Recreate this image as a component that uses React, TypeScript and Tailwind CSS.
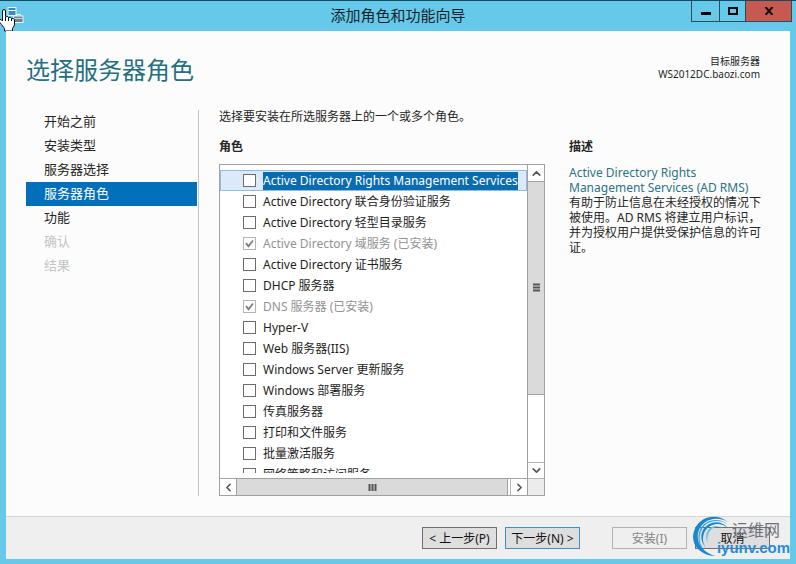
import React from "react";
import { ChevronDown, ChevronLeft, ChevronRight, ChevronUp } from "lucide-react";

const steps = [
  { label: "开始之前" },
  { label: "安装类型" },
  { label: "服务器选择" },
  { label: "服务器角色", active: true },
  { label: "功能" },
  { label: "确认", disabled: true },
  { label: "结果", disabled: true },
];

const roles = [
  { label: "Active Directory Rights Management Services", selected: true },
  { label: "Active Directory 联合身份验证服务" },
  { label: "Active Directory 轻型目录服务" },
  { label: "Active Directory 域服务 (已安装)", installed: true },
  { label: "Active Directory 证书服务" },
  { label: "DHCP 服务器" },
  { label: "DNS 服务器 (已安装)", installed: true },
  { label: "Hyper-V" },
  { label: "Web 服务器(IIS)" },
  { label: "Windows Server 更新服务" },
  { label: "Windows 部署服务" },
  { label: "传真服务器" },
  { label: "打印和文件服务" },
  { label: "批量激活服务" },
  { label: "网络策略和访问服务" },
];

const TitleBar: React.FC = () => (
  <header className="relative flex h-[31px] shrink-0 items-start justify-center border-t border-[#164a60]">
    <svg className="absolute left-[7px] top-[6px]" width="17" height="17" viewBox="0 0 17 17">
      <rect x="1" y="0.5" width="8" height="8" fill="#3d8cbf" stroke="#e8f6fc" />
      <path d="M1 3.500h8" stroke="#e8f6fc" />
      <path d="M9.500 9V7.500h4V9" fill="none" stroke="#e8f6fc" />
      <rect x="6.500" y="9" width="9.500" height="6.500" fill="#71848e" stroke="#e8f6fc" />
      <path d="M7 11.500h9" stroke="#c4d6dd" />
    </svg>
    <svg className="absolute left-0 top-2" width="16" height="23" viewBox="0 0 16 23">
      <path
        d="M2.500 12V2Q2.500 .5 4 .5T5.500 2v5.500q2.500-.8 3 1 2.500-.8 3 1 2.800-.8 3 1.500v5l-2 3.500v2.500H4.500v-2.500L1.500 15.500-1 12.500Q-1 10 1 10.500z"
        fill="#fff"
        stroke="#111"
      />
      <path d="M5.500 8v4M8.500 8.500V12M11.500 9.500V12" stroke="#111" />
    </svg>
    <h1 className="text-[15px] leading-[29px] text-[#15232a]">添加角色和功能向导</h1>
    <div className="absolute right-[4px] top-0 flex h-[21px] border border-t-0 border-[#2b4c5a]">
      <button aria-label="Minimize" className="flex w-[27px] items-center justify-center">
        <svg width="10" height="10"><path d="M0 7.500h10" stroke="#000" strokeWidth="3" /></svg>
      </button>
      <button aria-label="Maximize" className="flex w-[27px] items-center justify-center border-x border-[#2b4c5a]">
        <svg width="10" height="8"><rect x="1" y="1" width="8" height="6" fill="none" stroke="#000" strokeWidth="2" /></svg>
      </button>
      <button aria-label="Close" className="flex w-[45px] items-center justify-center bg-[#c75a50]">
        <svg width="10" height="8" viewBox="0 0 10 8"><path d="M1.500 0l7 8M8.500 0l-7 8" stroke="#111" strokeWidth="2" /></svg>
      </button>
    </div>
  </header>
);

const StepNav: React.FC = () => (
  <nav className="w-[173px] shrink-0 border-r border-[#c3c3c8] pr-px text-[13px]">
    {steps.map((s) => (
      <a
        key={s.label}
        href="#"
        aria-disabled={s.disabled}
        className={`block h-6 pl-[18px] leading-[22px] ${
          s.active ? "bg-[#0070ba] text-white" : s.disabled ? "text-[#c4c4c4]" : "text-[#262626]"
        }`}
      >
        {s.label}
      </a>
    ))}
  </nav>
);

const RoleList: React.FC = () => (
  <div className="flex min-h-0 flex-1 border border-[#a3a0a0] bg-white">
    <div className="flex min-w-0 flex-1 flex-col">
      <ul className="mb-[5px] mt-[5px] min-h-0 flex-1 overflow-hidden">
        {roles.map((r) => (
          <li
            key={r.label}
            className={`flex h-[21px] items-center border pl-[22px] ${
              r.selected ? "border-[#8fbddc] bg-[#dbe9fb]" : "border-transparent"
            }`}
          >
            <label className={`flex items-center whitespace-nowrap ${r.installed ? "text-[#929292]" : "text-[#1e1e1e]"}`}>
              <span className="relative mr-[7px] flex">
                <input
                  type="checkbox"
                  defaultChecked={r.installed}
                  disabled={r.installed}
                  className={`size-[13px] appearance-none border bg-white ${
                    r.installed ? "border-[#b4b4b4]" : "border-[#6c6c6c]"
                  }`}
                />
                {r.installed && (
                  <svg className="absolute inset-0" width="13" height="13" viewBox="0 0 13 13">
                    <path d="M3 6.200l2.500 3L10 3.500" fill="none" stroke="#7d7d7d" strokeWidth="1.800" />
                  </svg>
                )}
              </span>
              <span className={r.selected ? "bg-[#0a6cb0] text-white" : ""}>{r.label}</span>
            </label>
          </li>
        ))}
      </ul>
      <div className="flex h-[17px] shrink-0 border-t border-[#a3a0a0]">
        <button aria-label="Scroll left" className="flex w-4 items-center justify-center text-[#555]">
          <ChevronLeft size={13} strokeWidth={3} />
        </button>
        <div className="flex flex-1 items-center justify-center border-x border-[#a3a0a0] bg-[#dadada]">
          <svg width="9" height="7"><path d="M1.500 0v7M4.500 0v7M7.500 0v7" stroke="#555" strokeWidth="2" /></svg>
        </div>
        <button aria-label="Scroll right" className="ml-[2px] flex w-[17px] items-center justify-center border-l border-[#b5b5b5] text-[#555]">
          <ChevronRight size={13} strokeWidth={3} />
        </button>
      </div>
    </div>
    <div className="flex w-[17px] shrink-0 flex-col border-l border-[#a3a0a0]">
      <button aria-label="Scroll up" className="flex h-4 items-center justify-center text-[#555]">
        <ChevronUp size={13} strokeWidth={3} />
      </button>
      <div className="flex flex-[211] items-center justify-center border-y border-[#a3a0a0] bg-[#dadada]">
        <svg width="7" height="9"><path d="M0 1.500h7M0 4.500h7M0 7.500h7" stroke="#555" strokeWidth="2" /></svg>
      </div>
      <div className="flex-[67]" />
      <button aria-label="Scroll down" className="flex h-[17px] items-center justify-center border-y border-[#b5b5b5] text-[#555]">
        <ChevronDown size={13} strokeWidth={3} />
      </button>
      <div className="h-4 bg-[#ececec]" />
    </div>
  </div>
);

const Watermark: React.FC = () => (
  <div className="pointer-events-none absolute bottom-0 right-0 flex h-[44px] w-[99px]">
    <svg className="absolute left-0 top-0" width="46" height="44" viewBox="0 0 46 44">
      <path d="M37 7C25-3 6 2 2.500 18 0 30 9 40 24 41 12 37 5 28 7 18 10 5 25 0 37 7z" fill="#1b86c9" />
      <path d="M37 9.500C27 3 14 6 10 16c-3 8-1 15 5 21C8 32 6 24 8.500 16 12 5 27 1 37 9.500z" fill="#2ba7de" />
      <path d="M37 13C28 5.500 17 9 13 18c-2 6-1 10 2 15-5-6-6-12-3-18C17 6 30 4 37 13z" fill="#1b86c9" />
      <path d="M33 13.500C26 9.500 19 13 17 20c-1 3-1 5 0 8-3-5-2-10 1-14 4-4 10-4 15-.5z" fill="#58c2ec" />
    </svg>
    <div className="ml-auto flex flex-col items-end">
      <span className="mr-[10px] mt-[6px] text-[16px] leading-[18px] text-[#6c717b]">运维网</span>
      <span className="font-['Liberation_Sans'] text-[15px] font-bold leading-[18px] text-[#268bd8]">iyunv.com</span>
    </div>
  </div>
);

const App: React.FC = () => {
  return (
    <div className="flex h-screen flex-col overflow-hidden bg-[#66c9e9] font-['Noto_Sans','Noto_Sans_CJK_SC',sans-serif] text-[12px]">
      <TitleBar />
      <div className="relative mx-[6px] mb-[5px] flex min-h-0 flex-1 flex-col bg-[#fcfcfc]">
        <div className="flex h-[79px] shrink-0 items-start justify-between pl-5 pr-[30px] pt-6">
          <h2 className="text-[24px] leading-[30px] text-[#246f80]">选择服务器角色</h2>
          <p className="text-right text-[10px] leading-[13px] text-[#1e1e1e]">
            目标服务器
            <br />
            WS2012DC.baozi.com
          </p>
        </div>

        <main className="flex min-h-0 flex-1 pb-5 pl-5 pr-7">
          <StepNav />
          <section className="ml-5 flex min-w-0 flex-1 flex-col text-[#262626]">
            <p className="leading-[14px]">选择要安装在所选服务器上的一个或多个角色。</p>
            <h3 className="mb-[10px] mt-4 font-bold leading-[14px]">角色</h3>
            <RoleList />
          </section>
          <aside className="ml-6 w-[193px] shrink-0 pt-[30px] text-[#262626]">
            <h3 className="mb-[11px] font-bold leading-[14px]">描述</h3>
            <a href="#" className="block leading-[15px] text-[#2b7386]">
              Active Directory Rights Management Services (AD RMS)
            </a>
            <p className="leading-[15px]">
              有助于防止信息在未经授权的情况下被使用。AD RMS 将建立用户标识，并为授权用户提供受保护信息的许可证。
            </p>
          </aside>
        </main>

        <footer className="flex h-[43px] shrink-0 items-center justify-end border-t border-[#d6d6d6] bg-[#efefef] pr-5">
          <button className="h-[22px] w-[75px] border border-[#707070] bg-[#dedede] pt-px text-[#111]">&lt; 上一步(P)</button>
          <button className="ml-2 h-[22px] w-[75px] border border-[#3f8fc4] bg-[#dedede] pt-px text-[#111]">下一步(N) &gt;</button>
          <button disabled className="ml-8 h-[22px] w-[75px] border border-[#aeb2b5] pt-px text-[#848484]">安装(I)</button>
          <button className="ml-2 h-[22px] w-[75px] border border-[#707070] bg-[#dedede] pt-px text-[#111]">取消</button>
        </footer>
        <Watermark />
      </div>
    </div>
  );
};

export default App;
